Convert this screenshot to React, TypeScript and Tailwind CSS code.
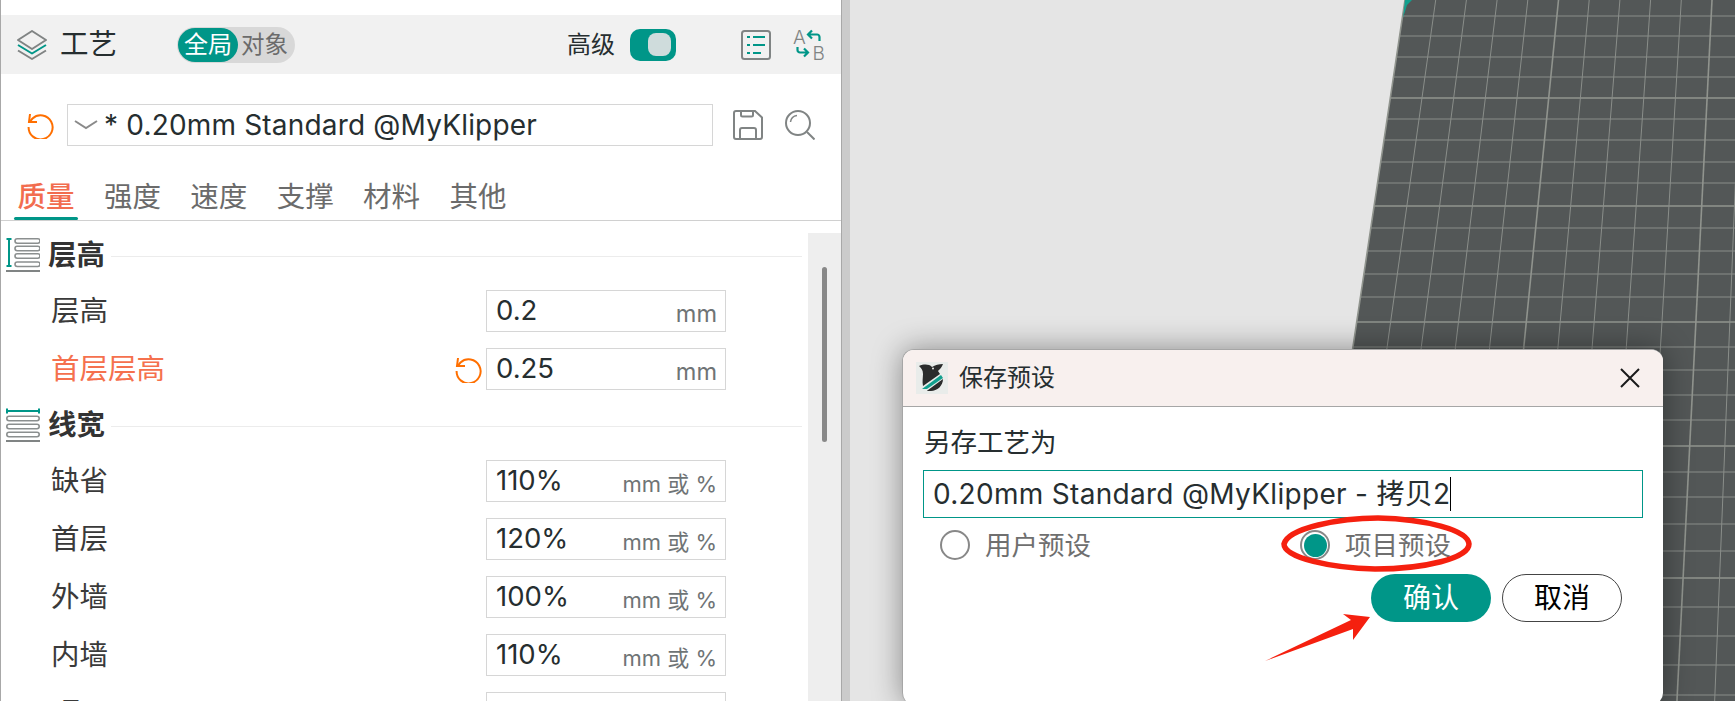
import React from "react";

const CJK = '"Inter","Noto Sans CJK SC",sans-serif';

const hLines = [16,36,57,77,98,119,140,162,183,206,228,251,274,297,322,347,370,395,420,446,472,497,524,551,578,607,636,665,695];
const thickH = new Set([98,206,322,446,578]);

function Viewport() {
  const vertical = Array.from({ length: 15 }, (_, i) => i);
  const xAt = (i: number, y: number) => 1405 - 0.15 * y + (30.7 + 0.01 * y) * i;
  return (
    <svg className="absolute inset-0 w-full h-full" viewBox="850 0 885 701">
      <polygon points="1405,0 1300,701 1735,701 1735,0" fill="#535757" />
      {hLines.map((y) => (
        <line key={y} x1={1405 - 0.15 * y} x2={1735} y1={y} y2={y} stroke={thickH.has(y) ? "#90948e" : "#8a8e8a"} strokeWidth={thickH.has(y) ? 1.6 : 1} />
      ))}
      {vertical.map((i) => (
        <line key={i} x1={xAt(i, 0)} y1={0} x2={xAt(i, 701)} y2={701} stroke={i % 5 === 0 ? "#90948e" : "#8a8e8a"} strokeWidth={i % 5 === 0 ? 1.6 : 1} />
      ))}
      <polygon points="1405,0 1412,0 1407,5 1403,18" fill="#12a08e" />
    </svg>
  );
}

function ResetIcon() {
  return (
    <svg width="27" height="27" viewBox="0 0 27 27" fill="none" stroke="#ff6f00" strokeWidth="2" className="shrink-0">
      <path d="M2.5 10 5.5 6.5A12 12 0 1 1 1.6 15" />
      <path d="M3 2 2 10h8" />
    </svg>
  );
}

function LayersIcon() {
  return (
    <svg width="30" height="30" viewBox="0 0 30 30" fill="none" strokeWidth="2" strokeLinejoin="round" className="shrink-0">
      <path d="M15 1 29 10 15 19 1 10Z" stroke="#808484" />
      <path d="M1 15 15 23.5 29 15" stroke="#009688" />
      <path d="M1 20.5 15 29 29 20.5" stroke="#808484" />
    </svg>
  );
}

function ListIcon() {
  return (
    <svg width="30" height="30" viewBox="0 0 30 30" fill="none" className="shrink-0">
      <rect x="1" y="1" width="28" height="28" rx="2.5" stroke="#808484" strokeWidth="2" />
      <path d="M6 7h3M12 7h12M6 15h3M12 15h12M6 23h3M12 23h8" stroke="#009688" strokeWidth="2" />
    </svg>
  );
}

function SwapIcon() {
  return (
    <svg width="32" height="32" viewBox="0 0 32 32" fill="none" className="shrink-0 overflow-visible">
      <text x="0" y="14.5" fontSize="19" fontWeight="300" fontFamily="Inter" fill="#808484">A</text>
      <text x="19.5" y="30.5" fontSize="19" fontWeight="300" fontFamily="Inter" fill="#808484">B</text>
      <path d="M26.5 12V8a2.5 2.5 0 0 0-2.5-2.5H15M19 1.5l-4 4 4 4" stroke="#009688" strokeWidth="2.2" />
      <path d="M4.5 18v3a2.5 2.5 0 0 0 2.5 2.5h8M11 19.5l4 4-4 4" stroke="#009688" strokeWidth="2.2" />
    </svg>
  );
}

function SaveIcon() {
  return (
    <svg width="30" height="30" viewBox="0 0 30 30" fill="none" stroke="#808484" strokeWidth="2" className="shrink-0">
      <path d="M3 1h19l7 6.5V27a2 2 0 0 1-2 2H3a2 2 0 0 1-2-2V3a2 2 0 0 1 2-2Z" />
      <path d="M8 1v4a1.5 1.5 0 0 0 1.5 1.5h9A1.5 1.5 0 0 0 20 5V1" />
      <path d="M7 29V20a2 2 0 0 1 2-2h12a2 2 0 0 1 2 2v9" />
    </svg>
  );
}

function SearchIcon() {
  return (
    <svg width="30" height="30" viewBox="0 0 30 30" fill="none" stroke="#808484" strokeWidth="2" className="shrink-0">
      <circle cx="13" cy="13" r="12" />
      <path d="M22 22l7.5 7.5" />
      <path d="M5.5 12A7.5 7.5 0 0 1 12 5.5" strokeWidth="1.5" />
    </svg>
  );
}

function HeightIcon() {
  return (
    <svg width="34" height="34" viewBox="0 0 34 34" fill="none" className="shrink-0">
      <path d="M0.5 1h5M3 1v27M0.5 28h5" stroke="#009688" strokeWidth="2" />
      {[0.8, 8.3, 15.8, 24].map((y) => (
        <rect key={y} x="9" y={y} width="25" height="4.5" rx="2.25" stroke="#8b8f8f" strokeWidth="1.6" />
      ))}
      <path d="M0 33h34" stroke="#808484" strokeWidth="2" />
    </svg>
  );
}

function WidthIcon() {
  return (
    <svg width="34" height="34" viewBox="0 0 34 34" fill="none" className="shrink-0">
      <path d="M1 0.5v5M1 3h32M33 0.5v5" stroke="#009688" strokeWidth="2" />
      {[8.3, 16.3, 24.3].map((y) => (
        <rect key={y} x="0.8" y={y} width="32.4" height="4.5" rx="2.25" stroke="#8b8f8f" strokeWidth="1.6" />
      ))}
      <path d="M0 33h34" stroke="#808484" strokeWidth="2" />
    </svg>
  );
}

function Logo() {
  return (
    <svg width="32" height="32" viewBox="0 0 32 32" className="shrink-0">
      <rect width="32" height="32" fill="#e9ecea" />
      <path d="M3 4C8 2 13 2 16 5C19 3 23 2 27 2C26 5 24 7 22 9L24 12 7 24C6 20 7 15 7 12C7 8 5 6 3 4Z" fill="#2b2c2c" />
      <path d="M6 27 25 13 27 16 11 27Z" fill="#12a08e" />
      <path d="M12 28 27 17C27 24 21 29 15 29 12 29 10 29 12 28Z" fill="#2b2c2c" />
      <circle cx="17" cy="6.5" r="1" fill="#e9ecea" />
    </svg>
  );
}

function Field({ value, unit }: { value: string; unit: string }) {
  return (
    <div className="w-[240px] h-[42px] border border-[#d6d6d6] flex items-center justify-between pl-[9px] pr-[8px]">
      <span className="text-[27.5px] text-[#262e30] leading-none">{value}</span>
      <span className={`${unit === "mm" ? "text-[23.5px]" : "text-[22px]"} text-[#6f7476] leading-none mt-[6px]`}>{unit}</span>
    </div>
  );
}

function Row({ label, value, unit, changed }: { label: string; value: string; unit: string; changed?: boolean }) {
  return (
    <div className="flex items-center h-[42px] pl-[50px]">
      <span className={`text-[28.5px] leading-none ${changed ? "text-[#f5714e]" : "text-[#3a3a3a]"}`}>{label}</span>
      <div className="ml-auto flex items-center gap-[4px]">
        {changed && <ResetIcon />}
        <Field value={value} unit={unit} />
      </div>
    </div>
  );
}

function SectionHead({ title, icon }: { title: string; icon: React.ReactNode }) {
  return (
    <div className="flex items-center h-[34px] pl-[5px]">
      {icon}
      <span className="ml-[8px] text-[28.5px] font-bold text-[#333] leading-none">{title}</span>
      <div className="flex-1 h-[1px] bg-[#ececec] ml-[6px] mt-[2px] -mr-[76px]" />
    </div>
  );
}

export default function App() {
  return (
    <div className="relative w-[1735px] h-[701px] overflow-hidden flex bg-[#e5e5e5] text-[#262e30]" style={{ fontFamily: CJK }}>
      <div className="w-[842px] h-full shrink-0 flex flex-col bg-white border-l-[1px] border-r-[1px] border-[#a8a8a8] pt-[15px]">
        <div className="h-[59px] bg-[#f1f1f1] flex items-center pl-[16px]">
          <LayersIcon />
          <span className="ml-[13px] text-[28.5px] leading-none">工艺</span>
          <div className="ml-[60px] h-[36px] w-[118px] rounded-full bg-[#d8d8d8] flex items-center p-[1px]">
            <span className="h-[34px] w-[60px] rounded-full bg-[#009688] text-white text-[24px] leading-none flex items-center justify-center">全局</span>
            <span className="ml-[3px] text-[23.5px] leading-none text-[#6b6b6b]">对象</span>
          </div>
          <span className="ml-auto text-[24px] leading-none">高级</span>
          <div className="ml-[15px] w-[46px] h-[32px] rounded-[10px] bg-[#009688] flex items-center justify-end pr-[5px]">
            <div className="w-[23px] h-[23px] rounded-[8px] bg-[#cfdcdc]" />
          </div>
          <div className="ml-[65px]"><ListIcon /></div>
          <div className="ml-[22px] mr-[16px]"><SwapIcon /></div>
        </div>

        <div className="h-[91px] flex items-center pl-[26px] pt-[11px]">
          <ResetIcon />
          <div className="ml-[13px] w-[646px] h-[42px] border border-[#d6d6d6] flex items-center pl-[6px]">
            <svg width="24" height="12" viewBox="0 0 24 12" fill="none" stroke="#8a8a8a" strokeWidth="2"><path d="M1 2l11 7L23 2" /></svg>
            <span className="ml-[6px] text-[28px] tracking-[0.18px] leading-none whitespace-nowrap">* 0.20mm Standard @MyKlipper</span>
          </div>
          <div className="ml-[20px]"><SaveIcon /></div>
          <div className="ml-[22px]"><SearchIcon /></div>
        </div>

        <div className="h-[56px] border-b-[1px] border-[#d0d0d0] flex items-end pl-[13px] gap-[22.4px] shrink-0">
          {["质量", "强度", "速度", "支撑", "材料", "其他"].map((t, i) => (
            <div key={t} className="h-full flex flex-col items-center justify-between w-[64px]">
              <span className={`text-[28.5px] leading-none mt-[18px] ${i === 0 ? "text-[#f26d4f] font-medium" : "text-[#6b6b6b]"}`}>{t}</span>
              {i === 0 && <div className="w-[64px] h-[3px] rounded-full bg-[#009688]" />}
            </div>
          ))}
        </div>

        <div className="flex-1 flex min-h-0 overflow-hidden">
          <div className="w-[807px] shrink-0 pt-[17px] pr-[82px] flex flex-col gap-[18px]">
            <SectionHead title="层高" icon={<HeightIcon />} />
            <div className="flex flex-col gap-[16px]">
              <Row label="层高" value="0.2" unit="mm" />
              <Row label="首层层高" value="0.25" unit="mm" changed />
            </div>
            <SectionHead title="线宽" icon={<WidthIcon />} />
            <div className="flex flex-col gap-[16px]">
              <Row label="缺省" value="110%" unit="mm 或 %" />
              <Row label="首层" value="120%" unit="mm 或 %" />
              <Row label="外墙" value="100%" unit="mm 或 %" />
              <Row label="内墙" value="110%" unit="mm 或 %" />
              <Row label="顶面" value="" unit="" />
            </div>
          </div>
          <div className="flex-1 mt-[12px] bg-[#eeeeee] flex justify-center pt-[34px]">
            <div className="w-[5px] h-[175px] rounded-full bg-[#888888]" />
          </div>
        </div>
      </div>

      <div className="w-[8px] h-full shrink-0 bg-[#cbcbcb]" />

      <div className="relative flex-1 h-full">
        <Viewport />
        <div className="absolute left-[52px] top-[349px] w-[761px] h-[356px] rounded-[12px] bg-white border-t border-l border-[#a6a6a6] overflow-hidden shadow-[0_0_30px_rgba(0,0,0,0.4)] flex flex-col">
          <div className="h-[57px] shrink-0 bg-[#f8f0ee] border-b-[1px] border-[#a6a6a6] flex items-center pl-[13px] pr-[23px]">
            <Logo />
            <span className="ml-[11px] text-[24px] leading-none">保存预设</span>
            <svg className="ml-auto" width="20" height="20" viewBox="0 0 20 20" stroke="#1a1a1a" strokeWidth="2"><path d="M1 1l18 18M19 1 1 19" /></svg>
          </div>
          <div className="flex flex-col pt-[17px]">
            <div className="h-[36px] pl-[21px] flex items-center text-[26.5px] leading-none">另存工艺为</div>
            <div className="ml-[20px] mt-[10px] w-[720px] h-[48px] border border-[#009688] flex items-center pl-[9px]">
              <span className="text-[28px] tracking-[0.3px] leading-none whitespace-nowrap">0.20mm Standard @MyKlipper - 拷贝2</span>
              <span className="w-px h-[34px] bg-black" />
            </div>
            <div className="mt-[12px] pl-[37px] flex h-[30px]">
              <div className="w-[360px] flex items-center gap-[15px]">
                <div className="w-[30px] h-[30px] rounded-full border-2 border-[#888]" />
                <span className="text-[26.5px] leading-none text-[#6f6f6f]">用户预设</span>
              </div>
              <div className="flex items-center gap-[15px]">
                <div className="w-[30px] h-[30px] rounded-full border-2 border-[#888] flex items-center justify-center">
                  <div className="w-[23px] h-[23px] rounded-full bg-[#009688]" />
                </div>
                <span className="text-[26.5px] leading-none text-[#6f6f6f]">项目预设</span>
              </div>
            </div>
            <div className="mt-[14px] pr-[41px] flex justify-end gap-[11px]">
              <div className="w-[120px] h-[48px] rounded-full bg-[#009688] text-white text-[28px] leading-none flex items-center justify-center">确认</div>
              <div className="w-[120px] h-[48px] rounded-full border border-[#444] text-black text-[28px] leading-none flex items-center justify-center">取消</div>
            </div>
          </div>
        </div>
      </div>

      <svg className="absolute inset-0 w-[1735px] h-[701px] pointer-events-none" viewBox="0 0 1735 701" fill="none">
        <path d="M1284 544C1288 528 1340 518 1378 518C1425 519 1468 530 1469 544C1469 558 1425 569 1375 569C1332 568 1284 558 1284 544Z" stroke="#f5200f" strokeWidth="5.5" />
        <polygon points="1265,661 1351,620 1343,614 1370,617 1353,640 1353,629" fill="#f5200f" />
      </svg>
    </div>
  );
}
